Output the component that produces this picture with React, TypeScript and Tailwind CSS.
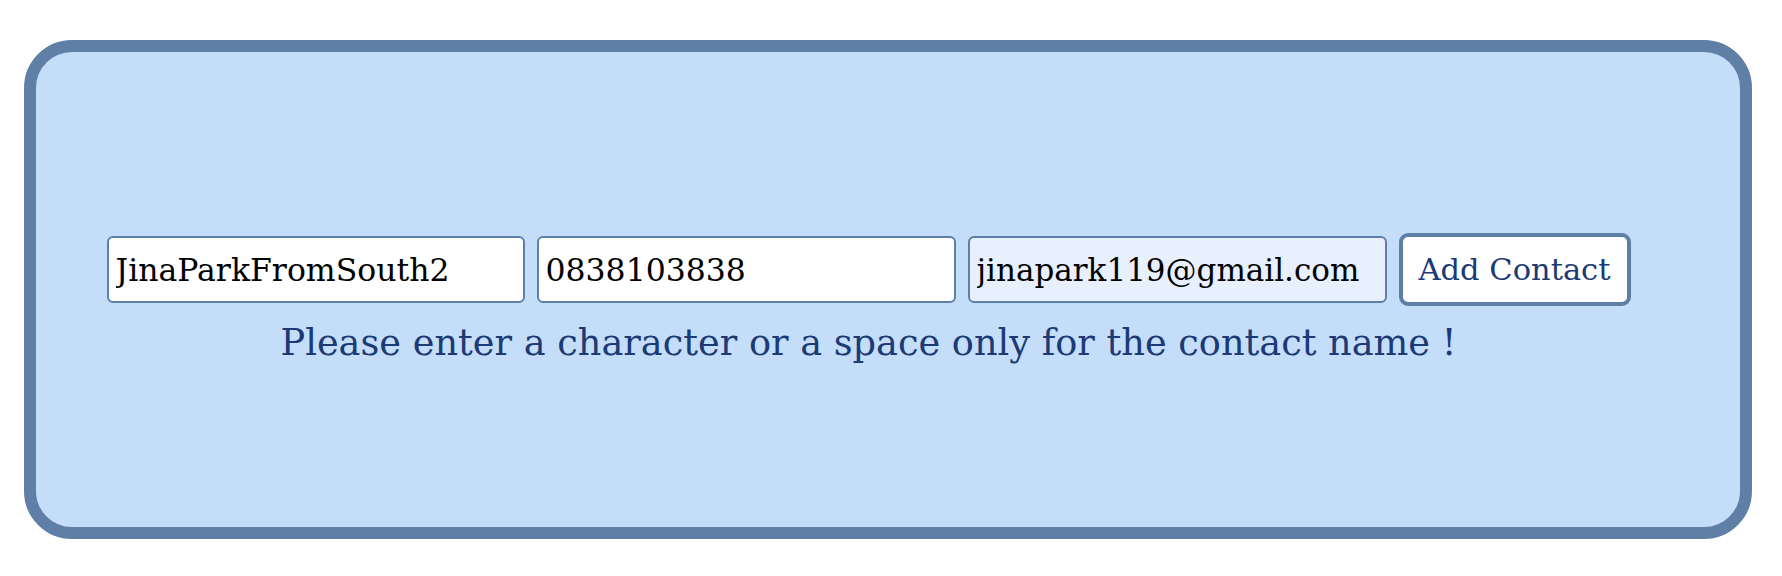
import { useState } from "react";

export default function App() {
  const [name, setName] = useState("JinaParkFromSouth2");
  const [phone, setPhone] = useState("0838103838");
  const [email, setEmail] = useState("jinapark119@gmail.com");

  return (
    <div className="w-[1782px] h-[576px] bg-white pt-[40px] pl-[24px]" style={{ fontFamily: '"DejaVu Serif", serif' }}>
      <div className="w-[1728px] h-[499px] rounded-[48px] border-[12px] border-[#5f7fa7] bg-[#c4defa] flex flex-col justify-center pl-[71px] pt-[22px]">
        <form className="w-[1523px] flex flex-col items-center" onSubmit={(e) => e.preventDefault()}>
          <div className="flex items-center gap-[12px]">
            <input
              value={name}
              onChange={(e) => setName(e.target.value)}
              className="w-[418px] h-[67px] px-[7px] bg-white border-2 border-[#5f7fa7] rounded-[6px] text-[31.5px] text-black outline-none"
            />
            <input
              value={phone}
              onChange={(e) => setPhone(e.target.value)}
              className="w-[419px] h-[67px] px-[7px] bg-white border-2 border-[#5f7fa7] rounded-[6px] text-[31.5px] text-black outline-none"
            />
            <input
              value={email}
              onChange={(e) => setEmail(e.target.value)}
              className="w-[419px] h-[67px] px-[7px] bg-[#e8f0fe] border-2 border-[#5f7fa7] rounded-[6px] text-[31px] text-black outline-none"
            />
            <button className="w-[232px] h-[73px] bg-white border-4 border-[#5f7fa7] rounded-[9px] text-[30.5px] text-[#1c3a75]">
              Add Contact
            </button>
          </div>
          <p className="mt-[12px] text-[36.7px] leading-[50px] text-[#1c3a75]">
            Please enter a character or a space only for the contact name !
          </p>
        </form>
      </div>
    </div>
  );
}
